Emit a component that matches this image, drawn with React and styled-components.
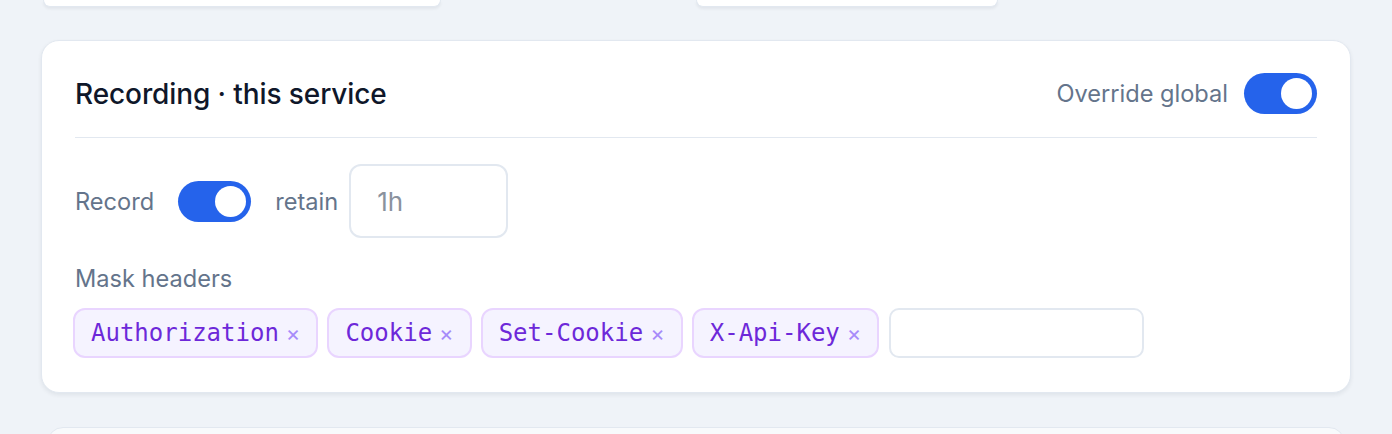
import React, { useState } from "react";
import styled, { createGlobalStyle } from "styled-components";

const GlobalStyle = createGlobalStyle`
    html, body {
        margin: 0;
        padding: 0;
        background: #eff3f8;
    }
    body {
        font-family: 'Inter', 'Noto Sans', sans-serif;
        color: #0f172a;
    }
`;

const headers = ["Authorization", "Cookie", "Set-Cookie", "X-Api-Key"];

export default function App() {
    const [override, setOverride] = useState(true);
    const [record, setRecord] = useState(true);
    const [masked, setMasked] = useState(headers);

    return (
        <>
            <GlobalStyle />
            <Page>
                <TopRow>
                    <StubCard width="398px" />
                    <StubCard width="302px" />
                </TopRow>

                <Card>
                    <CardHeader>
                        <Title>Recording · this service</Title>
                        <HeaderRight>
                            <Label>Override global</Label>
                            <Toggle on={override} onClick={() => setOverride(!override)} />
                        </HeaderRight>
                    </CardHeader>

                    <Body>
                        <FieldRow>
                            <Label>Record</Label>
                            <Toggle on={record} onClick={() => setRecord(!record)} />
                            <Label>retain</Label>
                            <RetainInput defaultValue="" placeholder="1h" />
                        </FieldRow>

                        <Group>
                            <Label>Mask headers</Label>
                            <ChipRow>
                                {masked.map((h) => (
                                    <Chip key={h}>
                                        {h}
                                        <Remove onClick={() => setMasked(masked.filter((m) => m !== h))}>×</Remove>
                                    </Chip>
                                ))}
                                <ChipInput />
                            </ChipRow>
                        </Group>
                    </Body>
                </Card>

                <NextCard />
            </Page>
        </>
    );
}

function Toggle({ on, onClick }) {
    return (
        <Switch on={on} onClick={onClick}>
            <Knob on={on} />
        </Switch>
    );
}

const Page = styled.div`
    width: 1392px;
    height: 434px;
    overflow: hidden;
    box-sizing: border-box;
    padding: 0 41px;
    display: flex;
    flex-direction: column;
`;

const TopRow = styled.div`
    display: flex;
    gap: 255px;
    padding-left: 2px;
    margin-bottom: 33px;
`;

const StubCard = styled.div`
    width: ${(p) => p.width};
    height: 7px;
    box-sizing: border-box;
    background: #fff;
    border: 1px solid #e2e8f0;
    border-top: none;
    border-radius: 0 0 16px 16px;
    box-shadow: 0 2px 3px rgba(15, 23, 42, 0.06);
`;

const Card = styled.section`
    background: #fff;
    border: 1px solid #e2e8f0;
    border-radius: 18px;
    box-shadow: 0 2px 4px rgba(15, 23, 42, 0.07);
    padding: 32px 33px 34px 33px;
    display: flex;
    flex-direction: column;
`;

const CardHeader = styled.div`
    display: flex;
    align-items: center;
    justify-content: space-between;
    height: 41px;
    padding-bottom: 23px;
    border-bottom: 1px solid #e2e8f0;
`;

const Title = styled.h2`
    margin: 0;
    font-size: 28px;
    font-weight: 500;
    color: #0f172a;
    letter-spacing: -0.1px;
`;

const HeaderRight = styled.div`
    display: flex;
    align-items: center;
    gap: 16px;
`;

const Label = styled.span`
    font-size: 23.6px;
    color: #64748b;
`;

const Switch = styled.button`
    width: 73px;
    height: 41px;
    border: none;
    border-radius: 999px;
    padding: 0 5px;
    background: ${(p) => (p.on ? "#2563eb" : "#cbd5e1")};
    display: flex;
    align-items: center;
    justify-content: ${(p) => (p.on ? "flex-end" : "flex-start")};
    cursor: pointer;
    box-sizing: border-box;
`;

const Knob = styled.span`
    width: 31px;
    height: 31px;
    border-radius: 50%;
    background: #fff;
`;

const Body = styled.div`
    display: flex;
    flex-direction: column;
    padding-top: 26px;
    gap: 26px;
`;

const FieldRow = styled.div`
    display: flex;
    align-items: center;

    & > :nth-child(1) { margin-right: 24px; }
    & > :nth-child(2) { margin-right: 24px; }
    & > :nth-child(3) { margin-right: 11px; }
`;

const RetainInput = styled.input`
    width: 159px;
    height: 74px;
    box-sizing: border-box;
    border: 2px solid #e2e8f0;
    border-radius: 12px;
    padding: 0 26px;
    font-family: 'Inter', sans-serif;
    font-size: 26px;
    color: #0f172a;
    outline: none;

    &::placeholder {
        color: #8a929e;
    }
`;

const Group = styled.div`
    display: flex;
    flex-direction: column;
    gap: 15px;
`;

const ChipRow = styled.div`
    display: flex;
    align-items: center;
    flex-wrap: wrap;
    gap: 9px;
    margin-left: -2px;
`;

const Chip = styled.span`
    display: inline-flex;
    align-items: center;
    gap: 7px;
    height: 50px;
    box-sizing: border-box;
    padding: 0 16px;
    background: #f5f3ff;
    border: 2px solid #e9d5ff;
    border-radius: 12px;
    font-family: 'DejaVu Sans Mono', 'Liberation Mono', monospace;
    font-size: 24px;
    color: #6d28d9;
`;

const Remove = styled.button`
    border: none;
    background: none;
    padding: 0;
    font-family: 'Inter', sans-serif;
    font-size: 22px;
    line-height: 1;
    color: #a78bfa;
    cursor: pointer;
`;

const ChipInput = styled.input`
    width: 255px;
    height: 50px;
    box-sizing: border-box;
    border: 2px solid #e2e8f0;
    border-radius: 10px;
    outline: none;
    margin-left: 1px;
`;

const NextCard = styled.div`
    margin: 34px 6px 0;
    height: 40px;
    flex-shrink: 0;
    background: #f8fafc;
    border: 1px solid #e2e8f0;
    border-radius: 16px;
`;
